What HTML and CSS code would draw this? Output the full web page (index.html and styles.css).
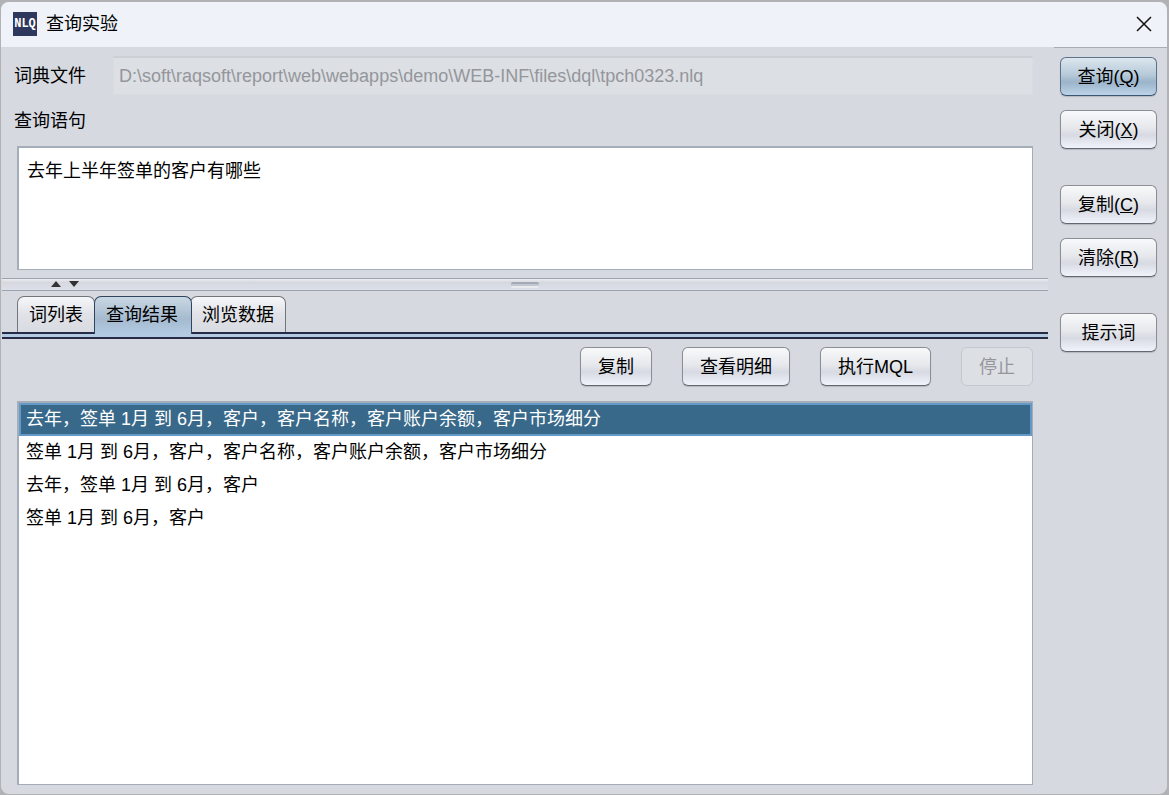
FILE: index.html
```html
<!DOCTYPE html>
<html lang="zh-CN">
<head>
  <meta charset="UTF-8" />
  <title>查询实验</title>
  <link rel="stylesheet" href="styles.css">
</head>
<body>
  <div class="window">
    <header class="titlebar">
      <span class="logo">NLQ</span>
      <h1>查询实验</h1>
      <button type="button" class="close" aria-label="关闭窗口">
        <svg width="18" height="18" viewBox="0 0 18 18"><path d="M2 2 L16 16 M16 2 L2 16" /></svg>
      </button>
    </header>

    <div class="content">
      <main class="main">
        <section class="query">
          <div class="file-row">
            <label for="archivo">词典文件</label>
            <input id="archivo" type="text" value="D:\soft\raqsoft\report\web\webapps\demo\WEB-INF\files\dql\tpch0323.nlq" disabled>
          </div>
          <label class="query-label" for="consulta">查询语句</label>
          <textarea id="consulta" spellcheck="false">去年上半年签单的客户有哪些</textarea>
        </section>

        <div class="splitter">
          <svg class="arrows" width="30" height="8" viewBox="0 0 30 8"><path d="M0 7 L5 1 L10 7 Z M18 1 L28 1 L23 7 Z" /></svg>
          <span class="grip"></span>
        </div>

        <div class="tabs" role="tablist">
          <button type="button" class="tab" role="tab">词列表</button>
          <button type="button" class="tab active" role="tab" aria-selected="true">查询结果</button>
          <button type="button" class="tab" role="tab">浏览数据</button>
        </div>

        <section class="results">
          <div class="toolbar">
            <button type="button" class="btn">复制</button>
            <button type="button" class="btn">查看明细</button>
            <button type="button" class="btn">执行MQL</button>
            <button type="button" class="btn" disabled>停止</button>
          </div>
          <ul class="list" role="listbox" aria-label="查询结果">
            <li class="selected" role="option" aria-selected="true">去年，签单 1月 到 6月，客户，客户名称，客户账户余额，客户市场细分</li>
            <li role="option">签单 1月 到 6月，客户，客户名称，客户账户余额，客户市场细分</li>
            <li role="option">去年，签单 1月 到 6月，客户</li>
            <li role="option">签单 1月 到 6月，客户</li>
          </ul>
        </section>
      </main>

      <aside class="side">
        <div class="group">
          <button type="button" class="btn primary">查询(<u>Q</u>)</button>
          <button type="button" class="btn">关闭(<u>X</u>)</button>
        </div>
        <div class="group">
          <button type="button" class="btn">复制(<u>C</u>)</button>
          <button type="button" class="btn">清除(<u>R</u>)</button>
        </div>
        <div class="group">
          <button type="button" class="btn">提示词</button>
        </div>
      </aside>
    </div>
  </div>
</body>
</html>
```

FILE: styles.css
```css
*, *::before {
  box-sizing: border-box;
}

body {
  margin: 0;
  padding: 2px 2px 1px 1px;
  height: 100vh;
  background-color: #b2b2b4;
  color: #000;
}

body, button, input, textarea {
  font-family: "Liberation Sans", "Noto Sans CJK SC", sans-serif;
  font-size: 18px;
  line-height: 26px;
}

.window {
  display: flex;
  flex-direction: column;
  height: 100%;
  background-color: #d6d9e0;
  border-radius: 8px;
  overflow: hidden;
}

/* Barra de título */
.titlebar {
  display: flex;
  align-items: center;
  gap: 9px;
  height: 45px;
  padding: 0 14px 2px 12px;
  background-color: #eff3f9;
}

.titlebar h1 {
  margin: 0;
  flex: 1;
  font-size: 18px;
  font-weight: normal;
}

.logo {
  width: 24px;
  height: 24px;
  background-color: #2d385c;
  color: #fff;
  font-family: "Liberation Mono", monospace;
  font-size: 12px;
  font-weight: bold;
  line-height: 24px;
  text-align: center;
}

.close {
  display: flex;
  padding: 0;
  border: none;
  background: none;
}

.close svg {
  fill: none;
  stroke: #111;
  stroke-width: 1.5;
}

.content {
  display: flex;
  flex: 1;
  min-height: 0;
}

.main {
  display: flex;
  flex: 1;
  flex-direction: column;
  min-width: 0;
  padding-left: 1px;
}

/* Consulta */
.query {
  display: flex;
  flex-direction: column;
  padding: 9px 15px 8px;
}

.file-row {
  display: flex;
  align-items: center;
}

.file-row label {
  width: 99px;
  margin-left: -3px;
}

.file-row input {
  flex: 1;
  min-width: 0;
  height: 39px;
  padding: 0 5px;
  border: 1px solid #d9dce0;
  border-top: 2px solid #cdd0d6;
  background-color: #dcdfe3;
  color: #94969c;
}

.query-label {
  margin: 13px 0 12px -3px;
}

.query textarea {
  height: 124px;
  padding: 10px 8px;
  border: 2px solid #a4adb8;
  border-right-width: 1px;
  border-bottom-width: 1px;
  background-color: #fff;
  color: #000;
  resize: none;
  outline: none;
}

.splitter {
  display: grid;
  grid-template-columns: 1fr auto 1fr;
  align-items: start;
  height: 13px;
  border-top: 1px solid #9ca2ad;
  border-bottom: 1px solid #9ca2ad;
  background: linear-gradient(#eceef1, #d5d8df 30%, #dce0e9);
}

.arrows {
  margin: 1px 0 0 49px;
  fill: #333;
}

.grip {
  width: 28px;
  height: 6px;
  margin-top: 3px;
  border-top: 2px solid #a5a9b6;
  border-bottom: 2px solid #e9ebef;
  border-radius: 2px;
  background-color: #c3c7d0;
}

/* Pestañas */
.tabs {
  display: flex;
  padding: 5px 15px 0;
}

.tab {
  height: 36px;
  padding: 0 11px;
  border: 1px solid #72757c;
  border-bottom: none;
  border-radius: 7px 7px 0 0;
  background: linear-gradient(#f6f7f9, #e0e2e7 50%, #d8dbe1);
  color: #000;
}

.tab + .tab {
  margin-left: -1px;
}

.tab.active {
  position: relative;
  height: 38px;
  margin-bottom: -2px;
  padding: 0 13px 2px 11px;
  border-color: #2e455d;
  background: linear-gradient(#c9d7e3, #a5bacf 60%, #b2cbe2);
}

.tab.active + .tab {
  margin-left: -2px;
}

/* Resultados */
.results {
  display: flex;
  flex: 1;
  flex-direction: column;
  min-height: 0;
  padding-bottom: 9px;
}

.results::before {
  content: "";
  height: 7px;
  border-top: 2px solid #272b45;
  border-bottom: 2px solid #272b45;
  background-color: #b2cbe2;
}

.toolbar {
  display: flex;
  justify-content: flex-end;
  gap: 30px;
  padding: 8px 15px 15px;
}

.btn {
  height: 39px;
  padding: 0 17px;
  border: 1px solid #8b8e95;
  border-bottom-color: #64676d;
  border-radius: 6px;
  background: linear-gradient(#f8f9fa, #e6e8ec 45%, #d7dae2 65%, #f0f3fa);
  box-shadow: 0 1px 1px #b4b8c0;
  color: #000;
}

.btn.primary {
  border-color: #5d7288;
  border-bottom-color: #3a5570;
  background: linear-gradient(#dce6ee, #b7cad9 45%, #9bb4ca 65%, #bdd3e7);
}

.btn:disabled {
  border-color: #c4c7cd;
  background: #dcdfe4;
  box-shadow: none;
  color: #94969c;
}

.list {
  flex: 1;
  min-height: 0;
  margin: 0 15px;
  padding: 0;
  border: 2px solid #a4adb8;
  border-right-width: 1px;
  border-bottom-width: 1px;
  background-color: #fff;
  list-style: none;
  overflow: auto;
}

.list li {
  height: 33px;
  padding: 0 7px;
  line-height: 33px;
}

.list .selected {
  border: 2px solid #6499c8;
  padding: 0 5px;
  background-color: #39698a;
  color: #fff;
  line-height: 29px;
}

/* Botones laterales */
.side {
  display: flex;
  flex-direction: column;
  gap: 36px;
  width: 119px;
  padding: 0 10px 0 12px;
}

/* Línea bajo la barra de título */
.side::before {
  content: "";
  height: 1px;
  margin: 0 -10px -27px -6px;
  background-color: #a9acb2;
}

.group {
  display: flex;
  flex-direction: column;
  gap: 14px;
}

.side .btn {
  padding: 0;
}
```
